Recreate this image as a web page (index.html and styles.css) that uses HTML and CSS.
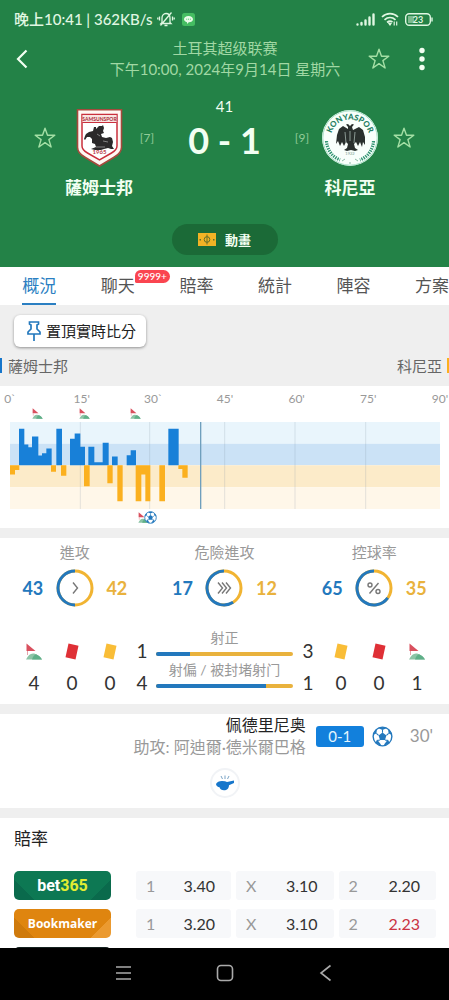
FILE: index.html
```html
<!DOCTYPE html>
<html lang="zh-Hant">
<head>
<meta charset="utf-8">
<meta name="viewport" content="width=device-width, initial-scale=1">
<title>薩姆士邦 0 - 1 科尼亞</title>
<link rel="stylesheet" href="styles.css">
</head>
<body>
<svg class="defs" width="0" height="0" aria-hidden="true">
  <symbol id="star" viewBox="0 0 24 24"><path d="M12 2.2l2.5 7h7.3l-5.9 4.4 2.2 7.4-6.1-4.4-6.1 4.4 2.2-7.4-5.9-4.4h7.3z" fill="none" stroke="currentColor" stroke-width="1.4" stroke-linejoin="round"/></symbol>
  <symbol id="corner" viewBox="0 0 16 17"><path d="M.5.500l9 7.500h-9z" fill="#d9505e"/><path d="M1.500 8v4" stroke="#e5a5ab" stroke-width="1"/><path d="M0 16.500c2-4 4-6 7-6s7 2.500 9 6z" fill="#8cc4a6"/><path d="M6 16.500c1-3 2-4.500 4-5.200 2.500 1 4.500 2.700 6 5.200z" fill="#5faf88"/></symbol>
  <symbol id="ball" viewBox="0 0 24 24"><circle cx="12" cy="12" r="10.700" fill="#fff" stroke="#2378bd" stroke-width="1.600"/><path d="M12 7.500l4.500 3.300-1.700 5.200H9.200l-1.700-5.200zM7.500 2.500L12 4.600l4.500-2.100L14 1.300h-4zM1.500 10l3.500-1.500.7-5-2.700 2.700zM22.500 10L19 8.500l-.7-5L21 6.200zM4 19l1.800-3.500 4.400 5.500-.8 1.800zM20 19l-1.800-3.500-4.400 5.500.8 1.800z" fill="#2378bd"/><path d="M12 4.600v3M5 8.500l2.500 2.300M19 8.500l-2.500 2.300M9.200 16l-3.200.5M14.800 16l3.200.5" stroke="#2378bd" stroke-width="1.200"/></symbol>
  <symbol id="card" viewBox="0 0 14 17"><path d="M3.500.500l10 2.200-3 13.800L.5 14.300z" fill="currentColor"/></symbol>
</svg>
<div class="app">
  <header class="hero">
    <div class="status">
      <span>晚上10:41 | 362KB/s</span>
      <svg class="mute" viewBox="0 0 18 16" fill="none" stroke="currentColor" stroke-width="1.300"><path d="M5 11.500V7c0-2.500 1.500-4.500 4-4.500S13 4.500 13 7v4.500l1 1H4zM7.500 14.500h3M14.500 1.500l-11 13M2.500 5.500v4M.8 6.500v2M15.500 5.500v4M17.200 6.500v2"/></svg>
      <svg class="chat" viewBox="0 0 13 13"><rect width="13" height="13" rx="2.500" fill="#45bd62"/><path d="M6.500 3c2.700 0 4.500 1.400 4.500 3.200S9.200 9.300 6.800 9.300L5 11V9.200C3.200 8.800 2 7.600 2 6.200 2 4.400 3.800 3 6.500 3z" fill="#e9fbe9"/><path d="M4.300 6.200h.9M6.100 6.200H7M7.900 6.200h.9" stroke="#45bd62"/></svg>
      <span class="spacer"></span>
      <svg class="signal" viewBox="0 0 20 13" stroke="currentColor" stroke-width="2.400" stroke-linecap="round"><path d="M1.500 11.500v0M5.500 11.500V10M9.500 11.500V7.500M13.500 11.500V4.500M17.500 11.500v-10"/></svg>
      <svg class="wifi" viewBox="0 0 18 14" fill="none" stroke="currentColor" stroke-width="1.700"><path d="M1 5c4.500-4.500 11.500-4.500 16 0M3.500 7.800c3.300-3 7.700-3 11 0M6 10.300c2-1.600 3.700-1.600 5.500-.3"/><path d="M7.500 11l1.500 2 1-1.500zM13.200 13.500V9.500M15.700 9.500v4" stroke-width="1.200"/></svg>
      <svg class="battery" viewBox="0 0 28 13"><rect x=".7" y=".7" width="24.600" height="11.600" rx="3.500" fill="none" stroke="currentColor" stroke-width="1.400"/><path d="M27 4.500v4" stroke="currentColor" stroke-width="1.400"/><rect x="3" y="3" width="6" height="7" fill="#7dbb8e"/><text x="13" y="10" text-anchor="middle" class="battery-text">23</text></svg>
    </div>
    <div class="topbar">
      <button class="icon-btn" aria-label="返回"><svg class="back" viewBox="0 0 12 20"><path d="M10.500 1.500L2 10l8.500 8.500" fill="none" stroke="currentColor" stroke-width="2.200"/></svg></button>
      <div class="league"><div>土耳其超级联赛</div><div>下午10:00, 2024年9月14日 星期六</div></div>
      <button class="icon-btn pale" aria-label="收藏賽事"><svg class="star" aria-hidden="true"><use href="#star"/></svg></button>
      <button class="icon-btn menu" aria-label="更多"><svg class="dots" viewBox="0 0 6 24" fill="currentColor"><circle cx="3" cy="3.500" r="2.700"/><circle cx="3" cy="12" r="2.700"/><circle cx="3" cy="20.500" r="2.700"/></svg></button>
    </div>
    <div class="match">
      <button class="icon-btn pale" aria-label="收藏薩姆士邦"><svg class="star"><use href="#star"/></svg></button>
      <div class="team">
        <svg class="crest" viewBox="0 0 47 58"><path d="M1.500.800h44v37.500c0 5-3 7.500-7.500 10L23.500 57 9 48.300c-4.500-2.500-7.500-5-7.500-10z" fill="#fff8f3" stroke="#a5493c" stroke-width="1.600"/><path d="M6 5.500h35V37c0 3-2 5-5.500 7l-12 7-12-7C8 42 6 40 6 37z" fill="#fff" stroke="#c92f3d" stroke-width="1.500"/><path d="M6.500 6h34v7h-34z" fill="#f9e4e1"/><path d="M6.500 13.500h34" stroke="#c92f3d" stroke-width="1"/><text x="23.500" y="11.700" text-anchor="middle" class="crest-name">SAMSUNSPOR</text><path d="M10 25l3-2 4-1 1-4 2 0 0 2 3-3 3 0 1-1 1 3-1 3 1 2-3 1 1 3 4 1 4-1 2 1 1 4-1 4 2 3-3 0-3-1-4 1-3 1-6 0-4-1 5-2-1-3-3-1 0-4-2-2-3 0-2 3-1-1 1-3z" fill="#2b292a"/><path d="M21 25l3 2M27 32l5 1M20 38l9 0" stroke="#999" stroke-width=".8"/><text x="23.500" y="45" text-anchor="middle" class="crest-year">1965</text></svg>
        <strong>薩姆士邦</strong>
      </div>
      <span class="rank">[7]</span>
      <div class="score"><div class="minute">41</div><strong>0 - 1</strong></div>
      <span class="rank">[9]</span>
      <div class="team">
        <svg class="crest round" viewBox="0 0 58 58"><defs><path id="arc" d="M9.500 30a19.500 19.500 0 0 1 39 0"/></defs><circle cx="29" cy="29" r="28" fill="#f8fffb"/><circle cx="29" cy="29" r="27.200" fill="none" stroke="#a5dfc5" stroke-width="1"/><text class="konya"><textPath href="#arc" startOffset="50%" text-anchor="middle">KONYASPOR</textPath></text><g fill="none" stroke="#329573" stroke-width="3.200" stroke-dasharray="1.400 1"><path d="M5.500 32c.5 9 6 16 13.500 19M52.500 32c-.5 9-6 16-13.500 19"/></g><path d="M27 18l-2-2.500 2-.5 2 2 2-2 2 .5-2 2.500 1 3 6-3 4 3 2 7 0 8-2-3-1 5-2-5-2 4-2-4-2 2 1 4 3 2-3 1-4-1-4 1-3-1 3-2 1-4-2-2-2 4-2-4-2 4-2-5-2 3 1-9 2-6 4-3 5 3z" fill="#29302d"/><path d="M24 23l1 11M34 23l-1 11M29 22v10" stroke="#8a9993" stroke-width="1"/><text x="29" y="46" text-anchor="middle" class="konya-year">1922</text><path d="M21 52l3-2M37 52l-3-2M28 54h2" stroke="#8ab9a4"/></svg>
        <strong>科尼亞</strong>
      </div>
      <button class="icon-btn pale" aria-label="收藏科尼亞"><svg class="star"><use href="#star"/></svg></button>
    </div>
    <button class="anim"><svg class="pitch" viewBox="0 0 18 13"><rect width="18" height="13" fill="#f2b325"/><g stroke="#65702a" fill="none"><circle cx="9" cy="6.500" r="2.800"/><path d="M9 1.500v10"/></g><path d="M1.500 6h1.500v1.500H1.500zM15 6h1.500v1.500H15z" fill="#65702a"/></svg>動畫</button>
  </header>

  <nav class="tabs">
    <a href="#overview" class="tab active" aria-current="page"><span>概況</span></a>
    <a href="#chat" class="tab"><span>聊天<b class="badge">9999+</b></span></a>
    <a href="#odds" class="tab"><span>賠率</span></a>
    <a href="#stats" class="tab"><span>統計</span></a>
    <a href="#lineup" class="tab"><span>陣容</span></a>
    <a href="#plans" class="tab"><span>方案</span></a>
  </nav>

  <main class="content" id="overview">
    <div class="pinbar">
      <button class="pin"><svg viewBox="0 0 14 20" fill="none" stroke="#2378bd" stroke-width="1.700"><path d="M2.500 1h9v2L10 4v4l3 3v2H1v-2l3-3V4L2.500 3zM7 13v7"/></svg>置頂實時比分</button>
    </div>
    <div class="sides"><span class="side home">薩姆士邦</span><span class="side away">科尼亞</span></div>

    <section class="panel momentum">
      <div class="axis"><span>0`</span><span>15'</span><span>30`</span><span>45'</span><span>60'</span><span>75'</span><span>90'</span></div>
      <div class="marks">
        <svg style="left:6.400%"><use href="#corner"/></svg><svg style="left:17.400%"><use href="#corner"/></svg><svg style="left:29.300%"><use href="#corner"/></svg>
      </div>
      <svg class="chart" viewBox="30 112 1290 259" preserveAspectRatio="none" role="img" aria-label="進攻走勢">
        <path fill="#e9f5fc" d="M30 112h1290v65H30z"/><path fill="#cbe2f6" d="M30 177h1290v64H30z"/><path fill="#fcebc9" d="M30 241h1290v65H30z"/><path fill="#fff7e9" d="M30 306h1290v65H30z"/>
        <path d="M241 112v259M449 112v259M674 112v259M885 112v259M1097 112v259" stroke="#8296a5" stroke-opacity=".22" stroke-width="3"/>
        <path fill="#1880d8" d="M57 241V132h16v47h12v8h11v-32h19v57h11v-7h13v-14h16v50zM169 241V132h17v109zM210 241v-79h14v-16h17v40h14v55zM265 241v-55h18v46h25v-58h18v67zM336 241v-26h17v26zM380 241v-30h12v-15h16v45zM505 241V132h31v109z"/>
        <path fill="#fbb01f" d="M30 241v27h15v-13h13v-14zM153 241v19h15v-19zM183 241v31h16v-31zM252 241v62h17v-62zM322 241v53h16v-53zM352 241v107h16V241zM407 241v107h17v-80h12v80h15V241zM478 241v107h17V241zM535 241v11h12v26h16v-37z"/>
        <path d="M602 112v259" stroke="#6f9fbd" stroke-width="4"/>
      </svg>
      <div class="marks low"><svg style="left:31.200%"><use href="#corner"/></svg><svg class="goal" style="left:32.500%"><use href="#ball"/></svg></div>
    </section>

    <section class="panel stats" id="stats">
      <div class="rings">
        <div class="ring-stat"><h3>進攻</h3><div class="ring-row"><b class="blue">43</b>
          <svg class="ring" viewBox="0 0 38 38" fill="none"><circle cx="19" cy="19" r="17" class="ring-away"/><circle cx="19" cy="19" r="17" class="ring-home" pathLength="100" stroke-dasharray="50 50" transform="rotate(90 19 19)"/><path d="M17 13.500l4.500 5.500-4.500 5.500" class="glyph"/></svg>
          <b class="amber">42</b></div></div>
        <div class="ring-stat"><h3>危險進攻</h3><div class="ring-row"><b class="blue">17</b>
          <svg class="ring" viewBox="0 0 38 38" fill="none"><circle cx="19" cy="19" r="17" class="ring-away"/><circle cx="19" cy="19" r="17" class="ring-home" pathLength="100" stroke-dasharray="59 41" transform="rotate(57.600 19 19)"/><path d="M13 13.500l4.500 5.500-4.500 5.500M17 13.500l4.500 5.500-4.500 5.500M21 13.500l4.500 5.500-4.500 5.500" class="glyph"/></svg>
          <b class="amber">12</b></div></div>
        <div class="ring-stat"><h3>控球率</h3><div class="ring-row"><b class="blue">65</b>
          <svg class="ring" viewBox="0 0 38 38" fill="none"><circle cx="19" cy="19" r="17" class="ring-away"/><circle cx="19" cy="19" r="17" class="ring-home" pathLength="100" stroke-dasharray="65 35" transform="rotate(36 19 19)"/><path d="M23.500 14l-9 10.500" class="glyph"/><circle cx="15" cy="16" r="2" class="glyph"/><circle cx="23" cy="22.500" r="2" class="glyph"/></svg>
          <b class="amber">35</b></div></div>
      </div>
      <div class="counts">
        <svg class="flag" role="img" aria-label="角球"><use href="#corner"/></svg><svg class="card red" role="img" aria-label="紅牌"><use href="#card"/></svg><svg class="card yellow" role="img" aria-label="黃牌"><use href="#card"/></svg>
        <span>1</span>
        <div class="bar-stat"><span>射正</span><div class="bar"><i style="width:25%"></i></div></div>
        <span>3</span>
        <svg class="card yellow" role="img" aria-label="黃牌"><use href="#card"/></svg><svg class="card red" role="img" aria-label="紅牌"><use href="#card"/></svg><svg class="flag" role="img" aria-label="角球"><use href="#corner"/></svg>
        <span>4</span><span>0</span><span>0</span><span>4</span>
        <div class="bar-stat"><span>射偏 / 被封堵射门</span><div class="bar"><i style="width:80%"></i></div></div>
        <span>1</span><span>0</span><span>0</span><span>1</span>
      </div>
    </section>

    <section class="panel events">
      <div class="event">
        <div class="who"><div class="scorer">佩德里尼奥</div><div class="assist">助攻: 阿迪爾·德米爾巴格</div></div>
        <span class="result">0-1</span>
        <svg class="event-ball"><use href="#ball"/></svg>
        <span class="time">30'</span>
      </div>
      <div class="whistle"><svg viewBox="0 0 20 16"><path d="M1 9c1-2 3-3 6-3l3 .3L12 7l7-1.500V8l-5 2.200c0 3-2 5-5 5-2.500 0-4-1.200-4.500-3C3 12.200 1 11 1 9z" fill="#1676cb"/><path d="M6 1l1.500 3M10 .5V4M14 1l-1.500 3" stroke="#7aa3c5" stroke-width="1"/></svg></div>
    </section>

    <section class="panel odds" id="odds">
      <h2>賠率</h2>
      <table>
        <tr><th scope="row"><div class="brand bet">bet<em>365</em></div></th><td><div class="odd"><span>1</span><b>3.40</b></div></td><td><div class="odd"><span>X</span><b>3.10</b></div></td><td><div class="odd"><span>2</span><b>2.20</b></div></td></tr>
        <tr><th scope="row"><div class="brand maker">Bookmaker</div></th><td><div class="odd"><span>1</span><b>3.20</b></div></td><td><div class="odd"><span>X</span><b>3.10</b></div></td><td><div class="odd"><span>2</span><b class="down">2.23</b></div></td></tr>
        <tr><th scope="row"><div class="brand dark"></div></th><td></td><td></td><td></td></tr>
      </table>
    </section>
  </main>

  <footer class="sysnav">
    <button aria-label="最近任務"><svg viewBox="0 0 18 18"><path d="M1 3h15M1 9h15M1 15h15"/></svg></button>
    <button aria-label="主畫面"><svg viewBox="0 0 18 18"><rect x="1.500" y="1.500" width="15" height="15" rx="3.500"/></svg></button>
    <button aria-label="返回上一頁"><svg viewBox="0 0 18 18"><path d="M13.500 1.500L4 9l9.500 7.500"/></svg></button>
  </footer>
</div>
</body>
</html>
```
FILE: styles.css
```css
* { box-sizing: border-box; }

body {
  margin: 0;
  background: #fff;
  color: #222;
  font-family: Lato, "Noto Sans CJK TC", sans-serif;
  font-size: 15px;
  line-height: 20px;
}

button { border: 0; padding: 0; background: none; color: inherit; font: inherit; }
svg { display: block; }
h2, h3 { margin: 0; font-weight: 400; }
.defs { position: absolute; }

.app { display: flex; flex-direction: column; height: 100vh; overflow: hidden; }

/* Match header */
.hero { flex: none; background: #238247; color: #f2fff2; padding-bottom: 12px; }

.status { display: flex; align-items: center; height: 38px; padding: 0 16px 0 14px; color: #e0f7e2; font-size: 15px; font-weight: 500; }
.spacer { flex: 1; }
.mute { width: 18px; height: 16px; margin-left: 4px; }
.chat { width: 13px; height: 13px; margin-left: 7px; }
.signal { width: 20px; height: 13px; margin-right: 5px; }
.wifi { width: 18px; height: 14px; margin-right: 6px; }
.battery { width: 28px; height: 13px; }
.battery-text { fill: currentColor; font-size: 9px; font-weight: 700; }

.topbar { display: flex; align-items: center; height: 42px; padding: 0 16px 0 10px; }
.icon-btn { display: flex; justify-content: center; flex: none; width: 24px; }
.pale { color: #a4dfa5; }
.back { width: 12px; height: 20px; }
.star { width: 24px; height: 24px; }
.menu { margin-left: 20px; width: 22px; }
.dots { width: 6px; height: 24px; }
.league { flex: 1; padding-left: 49px; text-align: center; color: #a1d8a4; line-height: 21px; white-space: nowrap; }

.match { display: grid; grid-template-columns: 24px 72px 12px 1fr 12px 72px 24px; column-gap: 6px; align-items: start; padding: 16px 33px 0; height: 132px; }
.match > .icon-btn { margin-top: 30px; }
.team { display: flex; flex-direction: column; align-items: center; padding-top: 13px; }
.team strong { margin-top: 8px; line-height: 26px; font-size: 17px; white-space: nowrap; }
.crest { width: 47px; height: 58px; }
.crest.round { width: 58px; }
.crest-name { fill: #a52c38; font-size: 5px; font-weight: 700; }
.crest-year { fill: #b83c47; font-size: 6px; font-weight: 700; }
.konya { fill: #267e62; font-size: 8px; font-weight: 900; }
.konya-year { fill: #7c9c90; font-size: 4px; }
.rank { display: flex; justify-content: center; margin-top: 32px; color: #92cb98; font-size: 12px; }
.score { text-align: center; line-height: 20px; }
.score strong { display: block; margin-top: 9px; font-size: 36px; line-height: 30px; white-space: nowrap; }
.anim { display: flex; align-items: center; justify-content: center; gap: 9px; width: 106px; height: 31px; margin: 12px auto 0; border-radius: 16px; background: #1b6a37; font-size: 13px; font-weight: 700; }
.pitch { width: 18px; height: 13px; }

/* Tabs */
.tabs { display: flex; flex: none; height: 38px; overflow: hidden; background: #fff; }
.tab { display: flex; justify-content: center; flex: 0 0 17.5%; color: #555; font-size: 17px; line-height: 38px; text-decoration: none; white-space: nowrap; }
.tab span { position: relative; }
.tab.active { color: #2b7fc2; }
.tab.active span { border-bottom: 2px solid #2b7fc2; }
.badge { position: absolute; left: 100%; top: 3px; padding: 0 3px; border-radius: 6px 7px 7px 2px; background: #fa4550; color: #fff; font-size: 10px; font-weight: 500; line-height: 13px; }

/* Overview */
.content { flex: 1; min-height: 0; overflow-y: auto; scrollbar-width: none; background: #efefef; }
.pinbar { padding: 10px 14px 9px; }
.pin { display: flex; align-items: center; gap: 5px; height: 32px; padding: 0 10px 0 13px; border-radius: 6px; background: #fff; box-shadow: 0 1px 3px #0006; color: #222; font-size: 15px; }
.pin svg { width: 14px; height: 20px; }
.sides { display: flex; justify-content: space-between; height: 30px; padding-top: 2px; color: #666; }
.side { display: flex; align-items: center; height: 15px; }
.home { border-left: 2px solid #1676cb; padding-left: 6px; }
.away { border-right: 2px solid #fbb01f; padding-right: 5px; }
.panel { background: #fff; margin-bottom: 10px; }

.momentum { padding: 5px 9px 0 10px; height: 142px; }
.axis { display: flex; justify-content: space-between; height: 16px; color: #999; font-size: 12px; line-height: 16px; }
.axis span { display: flex; justify-content: center; width: 0; }
.marks { position: relative; height: 15px; }
.marks svg { position: absolute; top: 1px; width: 11px; height: 11px; margin-left: -6px; }
.marks.low svg { top: 3px; }
.marks.low .goal { top: 2px; width: 13px; height: 13px; }
.chart { width: 100%; height: 87px; }

.stats { height: 166px; padding-top: 4px; }
.rings { display: grid; grid-template-columns: repeat(3, 1fr); }
.ring-stat { text-align: center; color: #999; }
.ring-stat h3 { font-size: 15px; }
.ring-row { display: grid; grid-template-columns: 28px 38px 28px; gap: 9px; align-items: center; justify-content: center; margin-top: 7px; font-size: 18px; }
.ring { width: 38px; height: 38px; }
.ring-away { stroke: #f1b432; stroke-width: 3; }
.ring-home { stroke: #2378bd; stroke-width: 3; }
.glyph { stroke: #777; stroke-width: 1.4px; fill: none; }
.blue { color: #2378bd; }
.amber { color: #e9b23d; }

.counts { display: grid; grid-template-columns: repeat(3, 38px) 26px 1fr 28px repeat(3, 38px); grid-template-rows: 32px 32px; align-items: center; justify-items: center; padding: 0 13px 0 15px; margin-top: 28px; font-size: 19px; color: #333; }
.flag { width: 16px; height: 17px; }
.card { width: 14px; height: 17px; }
.red { color: #df3036; }
.yellow { color: #f9bd37; }
.bar-stat { width: 100%; margin-bottom: 18px; padding: 0 1px; text-align: center; color: #999; font-size: 14px; line-height: 20px; white-space: nowrap; }
.bar-stat > span { display: block; }
.bar { height: 4px; margin-top: 4px; border-radius: 2px; background: #e9b23d; overflow: hidden; }
.bar i { display: block; height: 4px; background: #2378bd; }

.events { height: 94px; }
.event { display: flex; align-items: center; justify-content: flex-end; padding-right: 16px; height: 44px; }
.who { text-align: right; line-height: 22px; font-size: 16px; color: #999; }
.scorer { color: #222; }
.result { width: 48px; margin-left: 10px; border-radius: 3px; background: #1280dc; color: #e4f6ff; text-align: center; line-height: 21px; }
.event-ball { width: 21px; height: 21px; margin-left: 8px; }
.time { margin-left: 17px; color: #999; font-size: 17px; }
.whistle { display: flex; align-items: center; justify-content: center; width: 30px; height: 30px; margin: 10px auto 0; border: 2px solid #f1f3f6; border-radius: 50%; }
.whistle svg { width: 20px; height: 16px; }

.odds { padding: 11px 13px 0 14px; margin: 0; }
.odds h2 { font-size: 17px; }
.odds table { width: 100%; margin-top: 22px; border-collapse: collapse; table-layout: fixed; }
.odds th { width: 122px; padding: 0 25px 9px 0; }
.odds td { padding: 0 0 9px 5px; }
.odds th + td { padding-left: 0; }
.odds td:nth-child(2) { width: 95px; }
.brand { height: 29px; border-radius: 5px; color: #fff; font-family: Roboto, sans-serif; font-size: 16px; line-height: 30px; text-align: center; }
.brand em { color: #e3ed32; font-style: normal; }
.bet { background: linear-gradient(45deg, #0a6a4c 16%, transparent 16%), linear-gradient(-45deg, #0a6a4c 16%, transparent 16%), #0d7853; }
.maker { background: linear-gradient(45deg, #cf7a0c 16%, transparent 16%), linear-gradient(-45deg, #eb9a30 16%, transparent 16%), #df850f; font-family: "Open Sans", sans-serif; font-size: 12px; }
.dark { background: #14211f; }
.odd { display: flex; justify-content: space-between; height: 29px; padding: 0 16px 0 10px; border-radius: 3px; background: #f7f8fa; color: #999; font-size: 16px; line-height: 29px; }
.odd b { color: #333; font-weight: 400; }
.odd .down { color: #ca3343; }

/* System navigation */
.sysnav { display: flex; flex: none; justify-content: center; align-items: center; gap: 83px; height: 52px; padding-bottom: 3px; background: #000; }
.sysnav svg { width: 18px; height: 18px; fill: none; stroke: #aaa; stroke-width: 1.6px; }
```
